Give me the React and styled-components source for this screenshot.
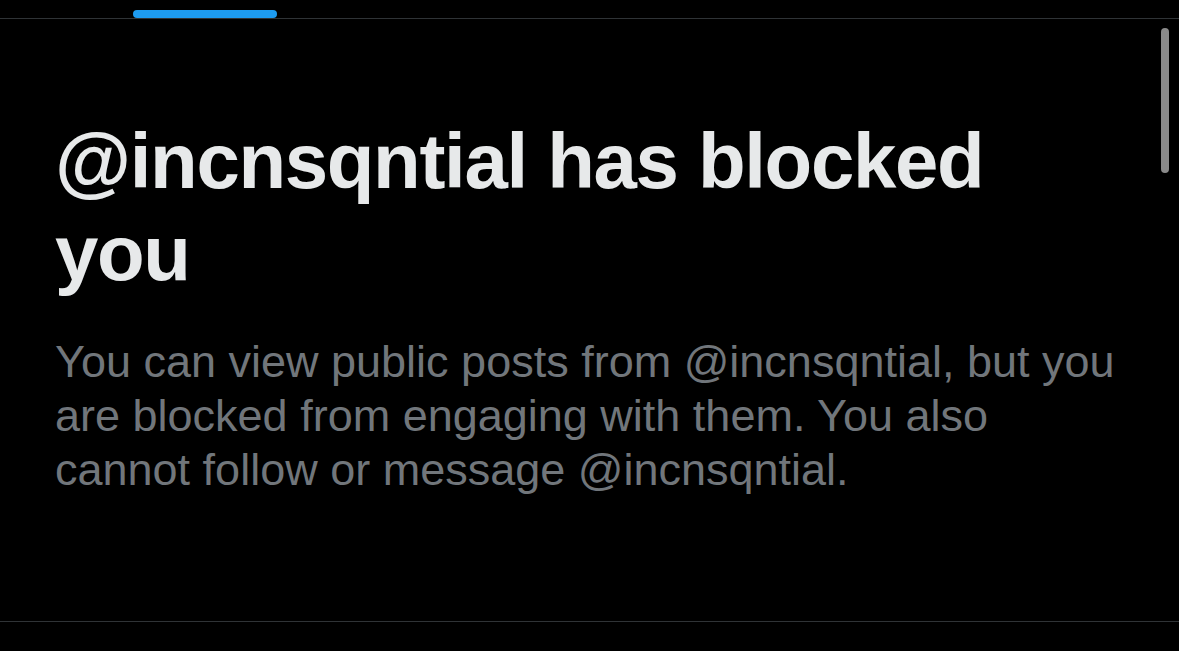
import React from 'react';
import styled, { createGlobalStyle } from 'styled-components';

const GlobalStyle = createGlobalStyle`
  html, body {
    margin: 0;
    padding: 0;
    background: #000;
  }
  body {
    font-family: "Liberation Sans", Arial, sans-serif;
  }
`;

const Screen = styled.div`
  position: relative;
  width: 1179px;
  height: 651px;
  background: #000;
  overflow: hidden;
  display: flex;
  flex-direction: column;
`;

const TabBar = styled.div`
  height: 18px;
  border-bottom: 1px solid #2f3336;
  display: flex;
  align-items: flex-end;
  padding-left: 133px;
`;

const TabIndicator = styled.div`
  width: 144px;
  height: 8px;
  border-radius: 4px;
  background: #1d9bf0;
`;

const Content = styled.div`
  flex: 1;
  padding: 96px 50px 0 55px;
  border-bottom: 1px solid #2f3336;
`;

const Title = styled.h1`
  margin: 0;
  width: 1000px;
  font-size: 78px;
  line-height: 92px;
  font-weight: 700;
  letter-spacing: -1.33px;
  color: #e7e9ea;
`;

const Body = styled.p`
  margin: 36px 0 0;
  width: 1070px;
  font-size: 45px;
  line-height: 54px;
  font-weight: 400;
  color: #71767b;
`;

const Footer = styled.div`
  height: 29px;
`;

const Scrollbar = styled.div`
  position: absolute;
  top: 28px;
  right: 10px;
  width: 8px;
  height: 145px;
  border-radius: 4px;
  background: #8a8a8a;
`;

export default function App() {
  return (
    <>
      <GlobalStyle />
      <Screen>
        <TabBar>
          <TabIndicator />
        </TabBar>
        <Content>
          <Title>@incnsqntial has blocked you</Title>
          <Body>
            You can view public posts from @incnsqntial, but you are blocked from
            engaging with them. You also cannot follow or message @incnsqntial.
          </Body>
        </Content>
        <Footer />
        <Scrollbar />
      </Screen>
    </>
  );
}
